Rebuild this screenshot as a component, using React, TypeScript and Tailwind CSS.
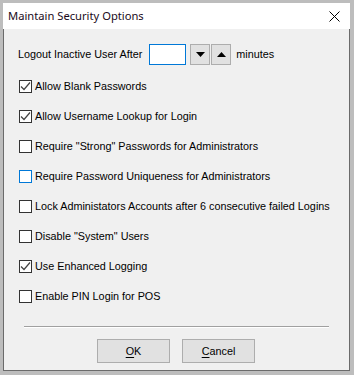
import React, { useState } from 'react';

const options = [
  { label: 'Allow Blank Passwords', checked: true },
  { label: 'Allow Username Lookup for Login', checked: true },
  { label: 'Require "Strong" Passwords for Administrators', checked: false },
  { label: 'Require Password Uniqueness for Administrators', checked: false, focus: true },
  { label: 'Lock Administators Accounts after 6 consecutive failed Logins', checked: false },
  { label: 'Disable "System" Users', checked: false },
  { label: 'Use Enhanced Logging', checked: true },
  { label: 'Enable PIN Login for POS', checked: false },
];

function CheckBox({ checked, focus }: { checked: boolean; focus?: boolean }) {
  return (
    <span
      className={
        'w-[13px] h-[13px] shrink-0 bg-white border flex items-center justify-center ' +
        (focus ? 'border-[#0078d7]' : 'border-[#333333]')
      }
    >
      {checked && (
        <svg width="11" height="11" viewBox="0 0 11 11">
          <path d="M1 5.5 L4 8.5 L10 1.5" fill="none" stroke="#444444" strokeWidth="1.2" />
        </svg>
      )}
    </span>
  );
}

export default function App() {
  const [items, setItems] = useState(options);

  const toggle = (i: number) =>
    setItems((prev) => prev.map((o, j) => (j === i ? { ...o, checked: !o.checked } : o)));

  return (
    <div className="w-[354px] h-[375px] bg-[#bdbdbd] pl-[3px] pt-[3px] pr-[4px] pb-[4px] flex flex-col font-['Liberation_Sans',Arial,sans-serif] text-black select-none">
      {/* Title bar */}
      <div className="h-[26px] bg-white flex items-center justify-between pl-[5px] pr-[10px]">
        <span className="text-[11.2px] font-['Noto_Sans',sans-serif] text-[#1a0a1a]">Maintain Security Options</span>
        <svg width="11" height="11" viewBox="0 0 11 11">
          <path d="M0.5 0.5 L10.5 10.5 M10.5 0.5 L0.5 10.5" stroke="#000" strokeWidth="1" />
        </svg>
      </div>

      {/* Body */}
      <div className="flex-1 bg-[#f0f0f0] border-x border-b border-[#6b6b6b] flex flex-col pt-[10px] text-[10.8px]">
        <div className="h-[30px] flex items-center pl-[14px]">
          <span>Logout Inactive User After</span>
          <div className="ml-[7px] w-[37px] h-[21px] bg-white border border-[#0078d7]" />
          <button className="ml-[4px] w-[20px] h-[21px] bg-[#e1e1e1] border border-[#adadad] flex items-center justify-center">
            <svg width="9" height="5" viewBox="0 0 9 5">
              <path d="M0 0 L9 0 L4.5 5 Z" fill="#000" />
            </svg>
          </button>
          <button className="ml-[1px] w-[20px] h-[21px] bg-[#e1e1e1] border border-[#adadad] flex items-center justify-center">
            <svg width="9" height="5" viewBox="0 0 9 5">
              <path d="M0 5 L9 5 L4.5 0 Z" fill="#000" />
            </svg>
          </button>
          <span className="ml-[5px]">minutes</span>
        </div>

        <div className="mt-[2px] flex flex-col">
          {items.map((o, i) => (
            <label
              key={i}
              onClick={() => toggle(i)}
              className="h-[30px] flex items-center pl-[15px] gap-[3px] cursor-default"
            >
              <CheckBox checked={o.checked} focus={o.focus} />
              <span>{o.label}</span>
            </label>
          ))}
        </div>

        <div className="mt-[15px] mx-[20px] h-[2px] border-t border-[#a0a0a0] border-b border-b-white" />

        <div className="mt-[11px] flex justify-center gap-[12px] pr-[1px]">
          <button className="w-[73px] h-[24px] bg-[#e1e1e1] border border-[#adadad]">
            <span className="underline underline-offset-2">O</span>K
          </button>
          <button className="w-[73px] h-[24px] bg-[#e1e1e1] border border-[#adadad]">
            <span className="underline underline-offset-2">C</span>ancel
          </button>
        </div>
      </div>
    </div>
  );
}
